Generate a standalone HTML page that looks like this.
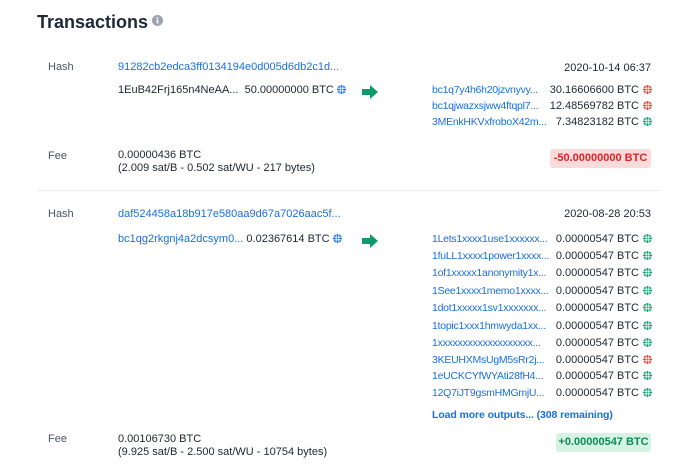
<!DOCTYPE html>
<html><head><meta charset="utf-8"><style>
body{margin:0;width:700px;height:470px;background:#fff;font-family:"Liberation Sans",Arial,sans-serif;color:#1f2430;position:relative;overflow:hidden}
.a{position:absolute;white-space:nowrap;font-size:11px;line-height:13px}
.l{color:#4b5563}
.b{color:#1a6fe0}
.r{text-align:right}
.g{display:inline-block;width:9px;height:9px;vertical-align:-1px;margin-left:3px}
.o{position:absolute;left:432px;width:220px;font-size:11px;line-height:13px;white-space:nowrap}
.o .b{position:absolute;left:0;top:0;font-size:10.5px;letter-spacing:-0.25px;max-width:120px;overflow:hidden}
.o .m{position:absolute;right:13px;top:0}
.o svg{position:absolute;right:0;top:1px;width:9px;height:9px}
.bt{position:absolute;border-radius:3px;font-size:11px;font-weight:bold;text-align:center;line-height:19px}
</style></head><body>
<div class="a" style="left:37px;top:10px;font-size:18px;line-height:24px;font-weight:bold;color:#1e2838">Transactions</div>
<svg style="position:absolute;left:152px;top:15px" width="11" height="11"><circle cx="5.5" cy="5.5" r="5.5" fill="#9ca3af"/><rect x="4.7" y="4.5" width="1.6" height="4" fill="#fff"/><rect x="4.7" y="2.2" width="1.6" height="1.5" fill="#fff"/></svg>

<svg width="0" height="0" style="position:absolute"><defs>
<g id="gl"><circle cx="4.5" cy="4.5" r="4.5"/><path d="M0 3.2h9M0 5.8h9M3.2 0v9M5.8 0v9" stroke="#fff" stroke-width="0.8"/></g></defs></svg>

<!-- tx1 -->
<div class="a l" style="left:48px;top:61px">Hash</div>
<div class="a b" style="left:118px;top:61px">91282cb2edca3ff0134194e0d005d6db2c1d...</div>
<div class="a" style="left:118px;top:84px">1EuB42Frj165n4NeAA...&nbsp; 50.00000000 BTC<svg class="g" style="fill:#1a6fe0"><use href="#gl"/></svg></div>
<svg style="position:absolute;left:362px;top:85px" width="16" height="14"><path d="M0 4h8V0l8 7-8 7v-4H0z" fill="#0f9a6a"/></svg>
<div class="a r" style="right:49px;top:62px">2020-10-14 06:37</div>
<div class="o" style="top:84px"><span class="b">bc1q7y4h6h20jzvnyvy...</span><span class="m">30.16606600 BTC</span><svg style="fill:#e53935"><use href="#gl"/></svg></div>
<div class="o" style="top:100px"><span class="b">bc1qjwazxsjww4ftqpl7...</span><span class="m">12.48569782 BTC</span><svg style="fill:#e53935"><use href="#gl"/></svg></div>
<div class="o" style="top:116px"><span class="b">3MEnkHKVxfroboX42m...</span><span class="m">7.34823182 BTC</span><svg style="fill:#0f9a6a"><use href="#gl"/></svg></div>
<div class="a l" style="left:48px;top:150px">Fee</div>
<div class="a" style="left:118px;top:149px">0.00000436 BTC<br>(2.009 sat/B - 0.502 sat/WU - 217 bytes)</div>
<div class="bt" style="left:550px;top:149px;width:101px;background:#fadada;color:#dc2626">-50.00000000 BTC</div>
<div style="position:absolute;left:37px;top:190px;width:624px;height:1px;background:#eceef1"></div>

<!-- tx2 -->
<div class="a l" style="left:48px;top:208px">Hash</div>
<div class="a b" style="left:118px;top:208px">daf524458a18b917e580aa9d67a7026aac5f...</div>
<div class="a" style="left:118px;top:233px"><span class="b">bc1qg2rkgnj4a2dcsym0...</span> 0.02367614 BTC<svg class="g" style="fill:#1a6fe0"><use href="#gl"/></svg></div>
<svg style="position:absolute;left:362px;top:234px" width="16" height="14"><path d="M0 4h8V0l8 7-8 7v-4H0z" fill="#0f9a6a"/></svg>
<div class="a r" style="right:49px;top:208px">2020-08-28 20:53</div>
<div class="o" style="top:233px"><span class="b">1Lets1xxxx1use1xxxxxx...</span><span class="m">0.00000547 BTC</span><svg style="fill:#0f9a6a"><use href="#gl"/></svg></div>
<div class="o" style="top:250px"><span class="b">1fuLL1xxxx1power1xxxx...</span><span class="m">0.00000547 BTC</span><svg style="fill:#0f9a6a"><use href="#gl"/></svg></div>
<div class="o" style="top:267px"><span class="b">1of1xxxxx1anonymity1x...</span><span class="m">0.00000547 BTC</span><svg style="fill:#0f9a6a"><use href="#gl"/></svg></div>
<div class="o" style="top:285px"><span class="b">1See1xxxx1memo1xxxx...</span><span class="m">0.00000547 BTC</span><svg style="fill:#0f9a6a"><use href="#gl"/></svg></div>
<div class="o" style="top:302px"><span class="b">1dot1xxxxx1sv1xxxxxxx...</span><span class="m">0.00000547 BTC</span><svg style="fill:#0f9a6a"><use href="#gl"/></svg></div>
<div class="o" style="top:320px"><span class="b">1topic1xxx1hmwyda1xx...</span><span class="m">0.00000547 BTC</span><svg style="fill:#0f9a6a"><use href="#gl"/></svg></div>
<div class="o" style="top:337px"><span class="b">1xxxxxxxxxxxxxxxxxxx...</span><span class="m">0.00000547 BTC</span><svg style="fill:#0f9a6a"><use href="#gl"/></svg></div>
<div class="o" style="top:354px"><span class="b">3KEUHXMsUgM5sRr2j...</span><span class="m">0.00000547 BTC</span><svg style="fill:#e53935"><use href="#gl"/></svg></div>
<div class="o" style="top:370px"><span class="b">1eUCKCYfWYAti28fH4...</span><span class="m">0.00000547 BTC</span><svg style="fill:#0f9a6a"><use href="#gl"/></svg></div>
<div class="o" style="top:387px"><span class="b">12Q7iJT9gsmHMGmjU...</span><span class="m">0.00000547 BTC</span><svg style="fill:#0f9a6a"><use href="#gl"/></svg></div>
<div class="a b" style="left:432px;top:409px;font-weight:bold;font-size:10.5px;letter-spacing:-0.1px">Load more outputs... (308 remaining)</div>
<div class="a l" style="left:48px;top:433px">Fee</div>
<div class="a" style="left:118px;top:433px">0.00106730 BTC<br>(9.925 sat/B - 2.500 sat/WU - 10754 bytes)</div>
<div class="bt" style="left:556px;top:433px;width:95px;background:#d5f3e2;color:#0f8a55">+0.00000547 BTC</div>
</body></html>
